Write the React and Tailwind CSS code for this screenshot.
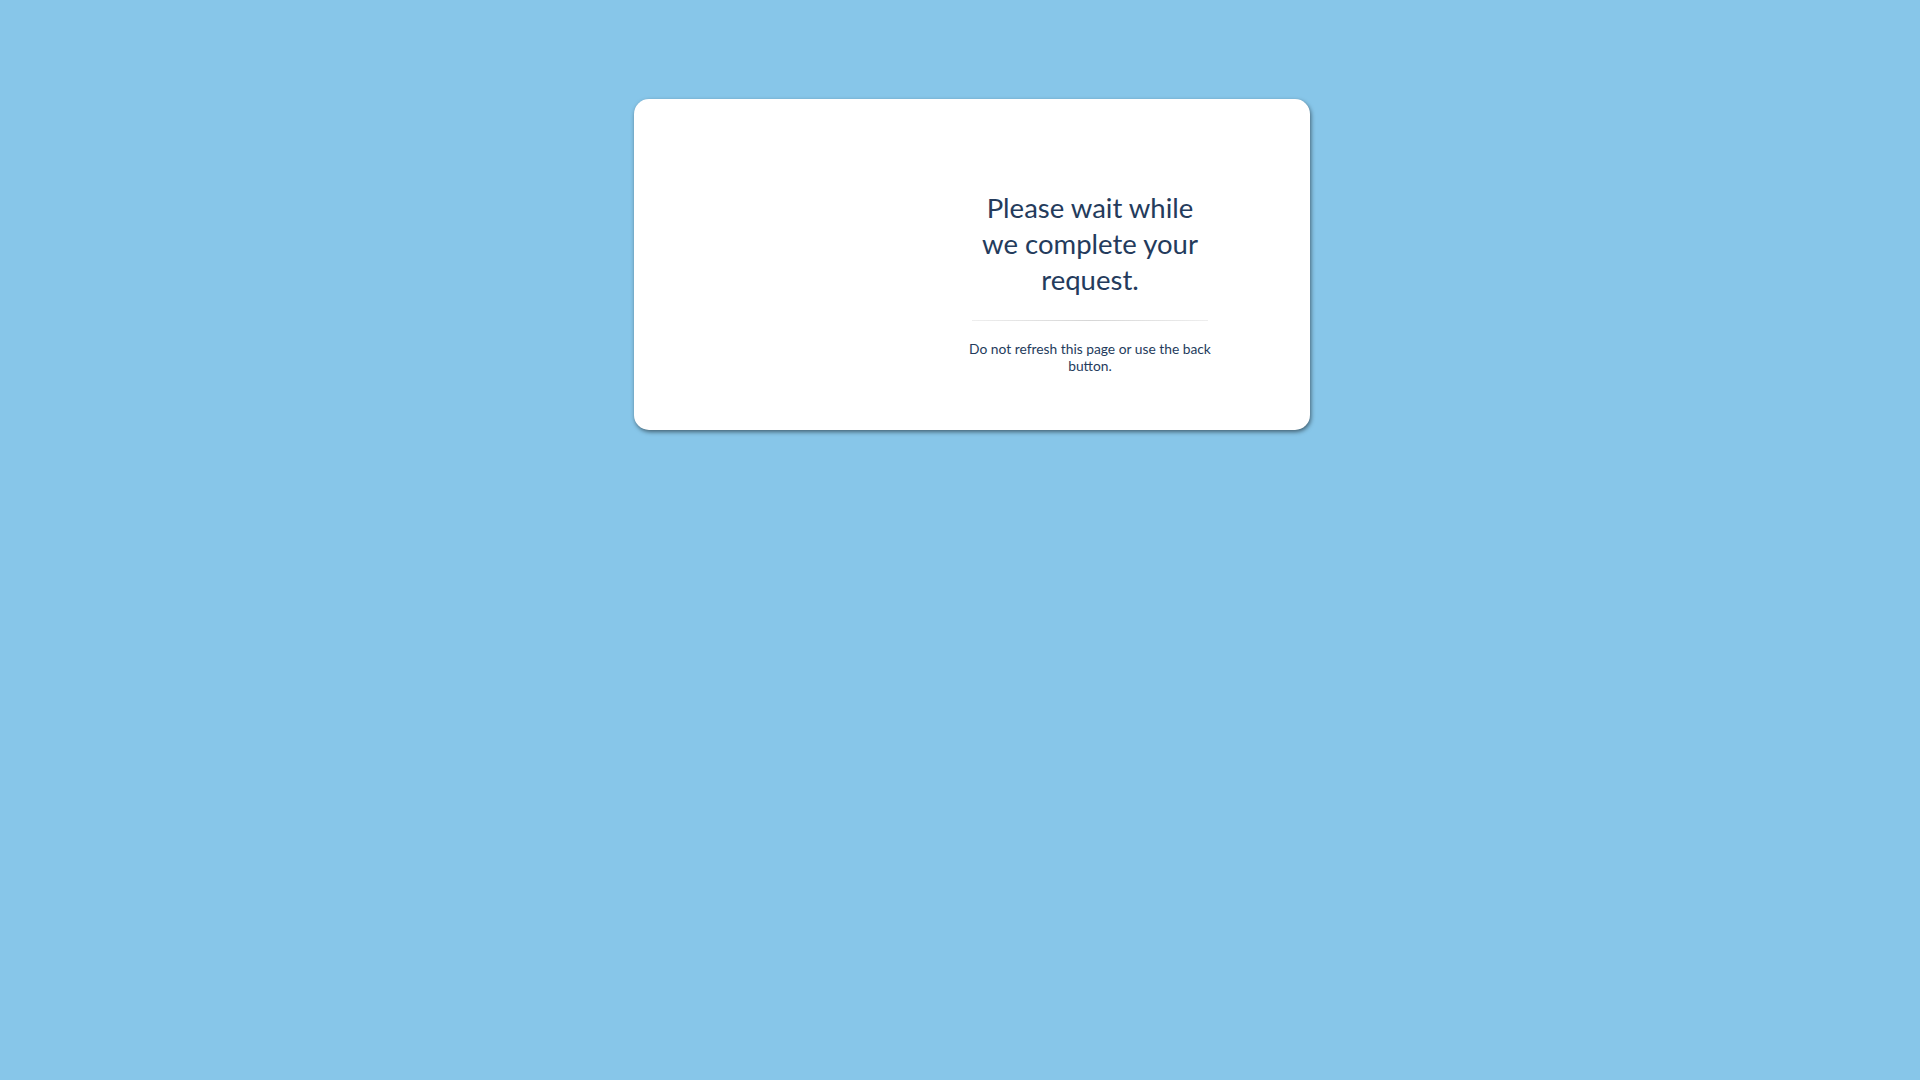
export default function App() {
  return (
    <div className="min-h-screen w-full bg-[#87c6e9] pt-[99px] pl-[634px]" style={{ fontFamily: 'Lato, "Open Sans", sans-serif' }}>
      {/* Card */}
      <div className="w-[676px] h-[331px] bg-white rounded-[15px] shadow-[1px_2px_4px_rgba(0,0,0,0.5)] flex justify-end pr-[100px] pt-[91px]">
        <div className="w-[240px] flex flex-col items-center text-center text-[#243b5c]">
          <h1 className="text-[27.5px] leading-[36px] font-normal w-[240px]">
            Please wait while we complete your request.
          </h1>
          <div className="mt-[22px] h-px w-[236px] bg-gradient-to-r from-[#eeeeee] via-[#d6d6d6] to-[#eeeeee]" />
          <p className="mt-[19px] text-[13.8px] leading-[17px] w-[252px] shrink-0">
            Do not refresh this page or use the back button.
          </p>
        </div>
      </div>
    </div>
  );
}
